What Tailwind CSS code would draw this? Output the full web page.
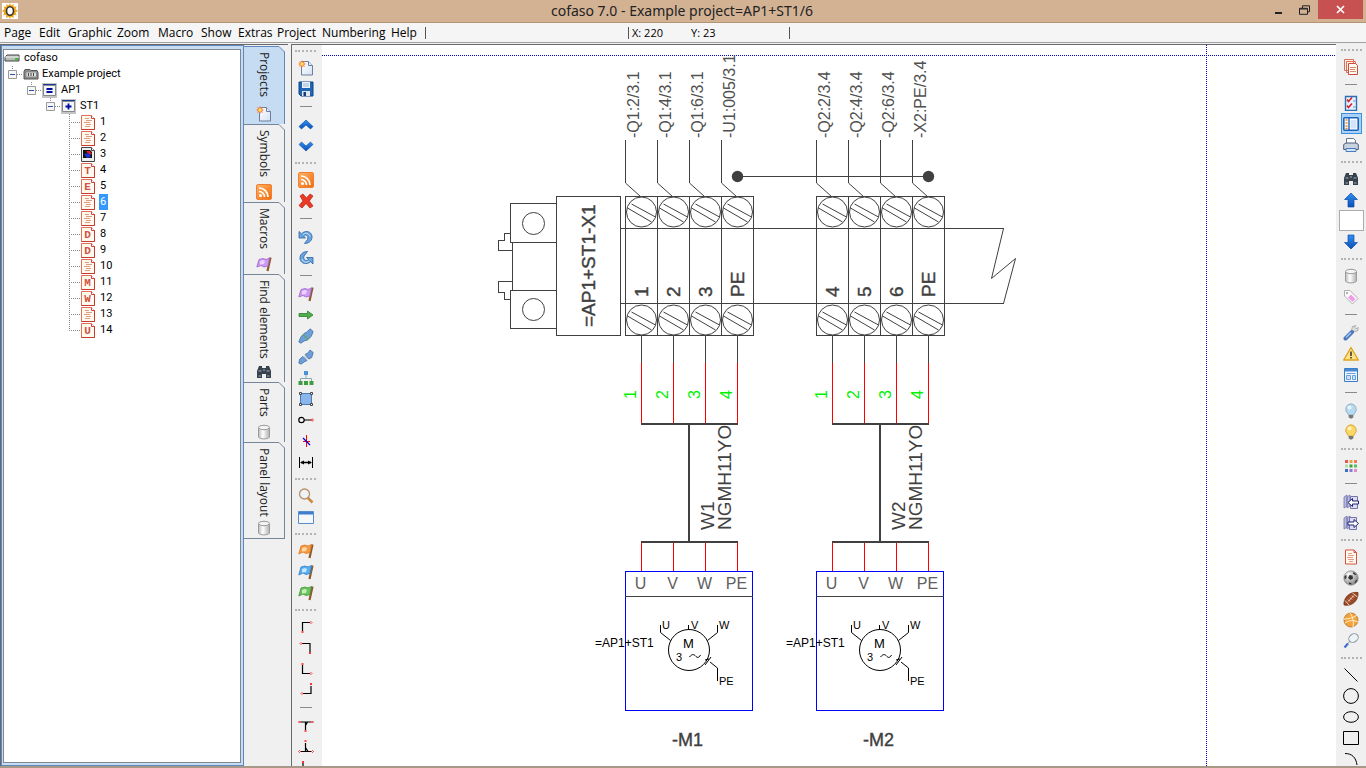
<!DOCTYPE html>
<html lang="en">
<head>
<meta charset="utf-8">
<title>cofaso 7.0 - Example project=AP1+ST1/6</title>
<script src="https://cdn.jsdelivr.net/npm/@tailwindcss/browser@4"></script>
</head>
<body class="flex h-screen flex-col overflow-hidden bg-[#f0f0f0] font-['Open_Sans','Liberation_Sans',sans-serif] text-xs text-black">

<svg width="0" height="0" class="absolute size-0" aria-hidden="true">
  <defs>
    <linearGradient id="gBlue" x1="0" y1="0" x2="0" y2="1"><stop offset="0" stop-color="#2f8ff0"/><stop offset="1" stop-color="#0b50b8"/></linearGradient>
    <linearGradient id="gPaper" x1="0" y1="0" x2="1" y2="1"><stop offset="0" stop-color="#fff"/><stop offset="1" stop-color="#d5e2f3"/></linearGradient>
    <linearGradient id="gOrange" x1="0" y1="0" x2="1" y2="1"><stop offset="0" stop-color="#ffb469"/><stop offset="1" stop-color="#f06a0a"/></linearGradient>
    <linearGradient id="gCyl" x1="0" y1="0" x2="1" y2="0"><stop offset="0" stop-color="#bdbdbd"/><stop offset=".4" stop-color="#fff"/><stop offset="1" stop-color="#b0b0b0"/></linearGradient>
    <radialGradient id="gBall" cx=".35" cy=".3" r=".8"><stop offset="0" stop-color="#fff"/><stop offset="1" stop-color="#777"/></radialGradient>
  </defs>
  <symbol id="i-new" viewBox="0 0 16 16"><path d="M3.500 1.500h7l4 4v9.500h-11z" fill="url(#gPaper)" stroke="#6b7f9c"/><path d="M10.500 1.500v4h4" fill="#e6eefa" stroke="#6b7f9c"/><path d="M4 0l1 2 2-1-1 2 2 1-2 1 1 2-2-1-1 2-1-2-2 1 1-2-2-1 2-1-1-2 2 1z" fill="#f47b4a"/><circle cx="4" cy="4" r="1.700" fill="#ffe65a"/></symbol>
  <symbol id="i-save" viewBox="0 0 16 16"><path d="M1 1h14v14H3l-2-2z" fill="#1f66b5" stroke="#0f4588"/><path d="M4 1h8v6H4z" fill="#eef4fb"/><path d="M5 3h6M5 5h6" stroke="#9ab7d8"/><path d="M4 10h8v5H4z" fill="#dfe6ee"/><path d="M5.500 11h2.500v4H5.500z" fill="#173c73"/></symbol>
  <symbol id="i-up" viewBox="0 0 16 16"><path d="M8 3l7 6.500-2.500 2.500L8 8l-4.500 4L1 9.500z" fill="url(#gBlue)" stroke="#0c4ba6" stroke-width=".6"/></symbol>
  <symbol id="i-down" viewBox="0 0 16 16"><path d="M8 13l7-6.500L12.500 4 8 8 3.500 4 1 6.500z" fill="url(#gBlue)" stroke="#0c4ba6" stroke-width=".6"/></symbol>
  <symbol id="i-rss" viewBox="0 0 16 16"><rect x=".5" y=".5" width="15" height="15" rx="1.500" fill="url(#gOrange)" stroke="#f08030"/><circle cx="4.500" cy="11.500" r="1.500" fill="#fff"/><path d="M3 7.500a5.500 5.500 0 0 1 5.500 5.500M3 4a9 9 0 0 1 9 9" fill="none" stroke="#fff" stroke-width="1.700"/></symbol>
  <symbol id="i-del" viewBox="0 0 16 16"><path d="M2 3l3-2 3.500 4L12 1l3 2-3.700 5L15 13l-3 2-4-4.500L4 15l-3-2.500L5 8z" fill="#ea3a24" stroke="#b81f12" stroke-width=".7"/></symbol>
  <symbol id="i-undo" viewBox="0 0 16 16"><path d="M1 2.500v6.500h6.500L5.500 7C8 5 11 6.500 9.500 10.500L6.500 14.500c5 0 8-3.500 7.500-7.500C13 2 7 1 3.500 4.800z" fill="#6aa5df" stroke="#2764a4" stroke-width=".8"/><path d="M5 5.500c3-2.500 6.500-1 7 2" fill="none" stroke="#cfe4f8"/></symbol>
  <symbol id="i-redo" viewBox="0 0 16 16"><path d="M15 14V7.500H8.500L10.500 9.500C8 11.500 5 10 6 6L9.500 1.500c-5 0-8 3.500-7.500 7.500C3 14 9 15 12.500 11.700z" fill="#6aa5df" stroke="#2764a4" stroke-width=".8"/><path d="M11 11c-3 2.500-6.500 1-7-2" fill="none" stroke="#cfe4f8"/></symbol>
  <symbol id="i-flagp" viewBox="0 0 16 16"><path d="M14.500 1.500l-3 13.500" stroke="#8d5a2a" stroke-width="2.200"/><path d="M3 3.500l4-1 3 1 3.500-1.500-1.500 8-4 1-3-1.500L.8 11z" fill="#c99af0" stroke="#a35fd0" stroke-width=".8"/><path d="M4 5l3-1 2 1-1 3-4 .5z" fill="#ead3ff"/></symbol>
  <symbol id="i-flago" viewBox="0 0 16 16"><path d="M14.500 1.500l-3 13.500" stroke="#8d5a2a" stroke-width="2.200"/><path d="M3 3l4-1 3 1 3.500-1.500-1.500 8-4 1-3-1.500L.8 11z" fill="#f79a45" stroke="#e0761d" stroke-width=".8"/><path d="M4 5l3-1 2 1-1 3-4 .5z" fill="#ffd7a8"/></symbol>
  <symbol id="i-flagb" viewBox="0 0 16 16"><path d="M14.500 1.500l-3 13.500" stroke="#8d5a2a" stroke-width="2.200"/><path d="M3 3l4-1 3 1 3.500-1.500-1.500 8-4 1-3-1.500L.8 11z" fill="#59adf2" stroke="#2a7fcc" stroke-width=".8"/><path d="M4 5l3-1 2 1-1 3-4 .5z" fill="#c4e6ff"/></symbol>
  <symbol id="i-flagg" viewBox="0 0 16 16"><path d="M14.500 1.500l-3 13.500" stroke="#8d5a2a" stroke-width="2.200"/><path d="M3 3l4-1 3 1 3.500-1.500-1.500 8-4 1-3-1.500L.8 11z" fill="#6cc35c" stroke="#3c9236" stroke-width=".8"/><path d="M4 5l3-1 2 1-1 3-4 .5z" fill="#c3eebb"/></symbol>
  <symbol id="i-right" viewBox="0 0 16 16"><path d="M1 6.500h8.500V4L15 8l-5.500 4V9.500H1z" fill="#4fae4c" stroke="#2b7d2c" stroke-width=".8"/></symbol>
  <symbol id="i-plug" viewBox="0 0 16 16"><path d="M.8 14l2-5L6 5.500l3-1.500L12 .8l3.200 2.700-2 5L9.500 12 6 13l-3 2.200z" fill="#6f9fd8" stroke="#3f6ea8" stroke-width=".8"/><path d="M5 6.500l5 5" stroke="#5fa85a" stroke-width="1.300"/></symbol>
  <symbol id="i-unplug" viewBox="0 0 16 16"><path d="M.8 14l1-4L5 7.500l4 4L6 13l-3 2.200zM7 5.500L10 4l2-3 3.200 2.500-1.500 5L11 10z" fill="#6f9fd8" stroke="#3f6ea8" stroke-width=".8"/><path d="M6.500 7l3.500 3.500" stroke="#bbb"/></symbol>
  <symbol id="i-org" viewBox="0 0 16 16"><path d="M8 5v4M2.500 11V8.500h11V11" fill="none" stroke="#8aa"/><path d="M6 1h4v4H6z" fill="#4a90dd"/><path d="M.5 11h4v4h-4zM6 11h4v4H6zM11.500 11h4v4h-4z" fill="#3f9c3f"/></symbol>
  <symbol id="i-sel" viewBox="0 0 16 16"><path d="M2.500 2.500h11v11h-11z" fill="#8ab6ec" stroke="#4b79b8"/><path d="M1.500 1.500h2v2h-2zM12.500 1.500h2v2h-2zM1.500 12.500h2v2h-2zM12.500 12.500h2v2h-2z" fill="#fff" stroke="#444"/></symbol>
  <symbol id="i-node" viewBox="0 0 16 16"><circle cx="3.500" cy="8" r="2.700" fill="none" stroke="#000" stroke-width="1.200"/><path d="M6 8h7" stroke="#000"/><circle cx="14.300" cy="8" r="1" fill="#fff" stroke="red" stroke-width=".8"/></symbol>
  <symbol id="i-cross" viewBox="0 0 16 16"><path d="M8.500 2v12M5 8.500h7" stroke="red"/><path d="M5 5l7 7" stroke="#0000e0" stroke-width="1.300"/></symbol>
  <symbol id="i-dim" viewBox="0 0 16 16"><path d="M1.500 3v11M14.500 3v11" stroke="#000"/><path d="M3 8.500h10" stroke="#000" stroke-width="1.500"/><path d="M2 8.500l4-2v4zM14 8.500l-4-2v4z"/></symbol>
  <symbol id="i-zoom" viewBox="0 0 16 16"><path d="M9.500 9.500l5 5" stroke="#c58a3f" stroke-width="2.500"/><circle cx="6.500" cy="6" r="5" fill="#eef3f8" stroke="#b89068" stroke-width="1.300"/></symbol>
  <symbol id="i-win" viewBox="0 0 16 16"><path d="M.5 2.500h15v12H.5z" fill="#f4f8fd" stroke="#5a8cc8"/><path d="M1 3h14v2.500H1z" fill="#3f7dd0"/></symbol>
  <symbol id="i-c1" viewBox="0 0 16 16"><path d="M4.500 12V3.500H12" fill="none" stroke="#000" stroke-width="1.200"/><path d="M4.500 12l1 1-1 1-1-1zM13 2.500l1 1-1 1-1-1z" fill="#fff" stroke="red" stroke-width=".8"/></symbol>
  <symbol id="i-c2" viewBox="0 0 16 16"><path d="M4 3.500h8V12" fill="none" stroke="#000" stroke-width="1.200"/><path d="M12 12l1 1-1 1-1-1zM3 2.500l1 1-1 1-1-1z" fill="#fff" stroke="red" stroke-width=".8"/></symbol>
  <symbol id="i-c3" viewBox="0 0 16 16"><path d="M4.500 4v8.500H12" fill="none" stroke="#000" stroke-width="1.200"/><path d="M4.500 2l1 1-1 1-1-1zM13 11.500l1 1-1 1-1-1z" fill="#fff" stroke="red" stroke-width=".8"/></symbol>
  <symbol id="i-c4" viewBox="0 0 16 16"><path d="M5 11.500h8V4" fill="none" stroke="#000" stroke-width="1.200"/><path d="M13 1l1 1-1 1-1-1zM4 10.500l1 1-1 1-1-1z" fill="#fff" stroke="red" stroke-width=".8"/></symbol>
  <symbol id="i-t1" viewBox="0 0 16 16"><path d="M2.500 4h11M7.500 4v8M9.500 4L7.500 7.500" fill="none" stroke="#000" stroke-width="1.200"/><path d="M7.500 12l1 1-1 1-1-1zM1.500 3l1 1-1 1-1-1zM14.500 3l1 1-1 1-1-1z" fill="#fff" stroke="red" stroke-width=".8"/></symbol>
  <symbol id="i-t2" viewBox="0 0 16 16"><path d="M2.500 12.500h11M7.500 4v8M7.500 8.500l2.500 4" fill="none" stroke="#000" stroke-width="1.200"/><path d="M7.500 1l1 1-1 1-1-1zM1.500 11.500l1 1-1 1-1-1zM14.500 11.500l1 1-1 1-1-1z" fill="#fff" stroke="red" stroke-width=".8"/></symbol>
  <symbol id="i-t3" viewBox="0 0 16 16"><path d="M5 3v12h4" fill="none" stroke="#000" stroke-width="1.200"/><path d="M5 1l1 1-1 1-1-1z" fill="#fff" stroke="red" stroke-width=".8"/></symbol>
  <symbol id="i-pages" viewBox="0 0 16 16"><path d="M1.500 .5h9v11h-9zM3.500 2.500h9v11h-9z" fill="#fff1e8" stroke="#d9705c"/><path d="M5.500 4.500h7l2 2v9h-9z" fill="#fffaf2" stroke="#cf4a38"/><path d="M7 8.500h6M7 10.500h5M7 12.500h6" stroke="#d88a70"/></symbol>
  <symbol id="i-check" viewBox="0 0 16 16"><path d="M2.500 1.500h11v14h-11z" fill="#e5f0fc" stroke="#2e6db5" stroke-width="1.400"/><path d="M4 4.500l1.500 2L9 2.500M4 10.500l1.500 2L9 8.500" fill="none" stroke="#d32020" stroke-width="1.500"/><path d="M10 6h2.500M10 12h2.500" stroke="#5b8fd0"/></symbol>
  <symbol id="i-layout" viewBox="0 0 16 16"><rect x=".8" y="1.800" width="14.400" height="12.400" rx="1" fill="#fff" stroke="#1b64c0" stroke-width="1.600"/><path d="M6 2v12" stroke="#1b64c0" stroke-width="1.400"/><path d="M2.500 4h2M2.500 7h2M2.500 10h2M2.500 12.500h2" stroke="#f28a1e" stroke-width="1.600"/><path d="M7.500 4h6v8.500h-6z" fill="#d4e5fa"/></symbol>
  <symbol id="i-print" viewBox="0 0 16 16"><path d="M3.500 7V1.500h7l2 2V7" fill="#fff" stroke="#5f7596"/><path d="M.7 7.500L3 6h10l2.300 1.500v5H.7z" fill="#c8d2e0" stroke="#4a5c78"/><path d="M3 11.500h10v3H3z" fill="#cfe4fa" stroke="#4a7cb8"/></symbol>
  <symbol id="i-bino" viewBox="0 0 16 16"><path d="M3 2h3v2h4V2h3l2 5v7h-5v-4H6v4H1V7z" fill="#36424d"/><path d="M2.500 7h3M10.500 7h3M2.500 12h2.500M11 12h2.500M7 6h2" stroke="#9fb0bd"/></symbol>
  <symbol id="i-aup" viewBox="0 0 16 16"><path d="M8 1l6.500 6.500H11V15H5V7.500H1.500z" fill="url(#gBlue)" stroke="#0e4ea5" stroke-width=".7"/></symbol>
  <symbol id="i-adn" viewBox="0 0 16 16"><path d="M8 15l6.500-6.500H11V1H5v7.500H1.500z" fill="url(#gBlue)" stroke="#0e4ea5" stroke-width=".7"/></symbol>
  <symbol id="i-cyl" viewBox="0 0 16 16"><path d="M2.500 3.500v9.500c1 2.500 10 2.500 11 0V3.500z" fill="url(#gCyl)" stroke="#9a9a9a"/><ellipse cx="8" cy="3.500" rx="5.500" ry="2.200" fill="#f4f4f4" stroke="#9a9a9a"/></symbol>
  <symbol id="i-tag" viewBox="0 0 16 16"><path d="M1.500 1.500H7L15 9.500 9.500 15 1.500 7z" fill="#fafafa" stroke="#b0b0b0"/><path d="M8 5.500l4.500 4.500-3 3L5 8.500z" fill="#f29bea"/><circle cx="4" cy="4" r="1" fill="#999"/></symbol>
  <symbol id="i-wrench" viewBox="0 0 16 16"><path d="M10 7l4.500-1 .8-3.500-2.300 1.200-1.500-1.500 1.300-1.700L9.500 1.500 8.500 5z" fill="#ddd" stroke="#999" stroke-width=".7"/><path d="M2.500 13.500L9 7" stroke="#4a78bf" stroke-width="4" stroke-linecap="round"/><path d="M3 12.500l5-5" stroke="#a6c6f0" stroke-width="1.400"/></symbol>
  <symbol id="i-warn" viewBox="0 0 16 16"><path d="M8 1.500L15.300 14H.7z" fill="#fbe388" stroke="#e0a21c" stroke-width="1.400" stroke-linejoin="round"/><path d="M8 5.500v4.500M8 11v1.500" stroke="#222" stroke-width="1.400"/></symbol>
  <symbol id="i-form" viewBox="0 0 16 16"><path d="M1.500 1.500h13v13h-13z" fill="#f0f6fd" stroke="#3b7dc8"/><path d="M2 2h12v2.500H2z" fill="#4a8ad4"/><path d="M3.500 6.500h9M3.500 8.500h4v4h-4zM9.500 8.500h3v4h-3z" fill="#cfe0f5" stroke="#6ca0dc"/></symbol>
  <symbol id="i-bulb" viewBox="0 0 16 16"><path d="M8 .8a5.500 5.500 0 0 1 3.500 9.500L10.500 12h-5l-1-1.700A5.500 5.500 0 0 1 8 .8z" fill="#b7daf0" stroke="#8fb2c8"/><circle cx="6.500" cy="4.500" r="2" fill="#eaf7ff"/><path d="M5.700 12h4.600v2.500L8 15.800l-2.300-1.300z" fill="#777"/></symbol>
  <symbol id="i-bulbon" viewBox="0 0 16 16"><path d="M8 .8a5.500 5.500 0 0 1 3.500 9.500L10.500 12h-5l-1-1.700A5.500 5.500 0 0 1 8 .8z" fill="#fbd768" stroke="#dda53a"/><circle cx="6.500" cy="4.500" r="2" fill="#fff4bd"/><path d="M5.700 12h4.600v2.500L8 15.800l-2.300-1.300z" fill="#777"/></symbol>
  <symbol id="i-grid" viewBox="0 0 16 16"><path d="M2 2h3v3H2z" fill="#e05a5a"/><path d="M6.500 2h3v3h-3z" fill="#f0a040"/><path d="M11 2h3v3h-3z" fill="#f07a60"/><path d="M2 6.500h3v3H2z" fill="#b8d8b0"/><path d="M6.500 6.500h3v3h-3z" fill="#38a838"/><path d="M11 6.500h3v3h-3z" fill="#58c060"/><path d="M2 11h3v3H2z" fill="#3f6fc0"/><path d="M6.500 11h3v3h-3z" fill="#8a78d8"/><path d="M11 11h3v3h-3z" fill="#e090c8"/></symbol>
  <symbol id="i-prev" viewBox="0 0 16 16"><path d="M1 3l3-2v11l-3 2zM4 3l3-2v11l-3 2z" fill="#b9b9e2" stroke="#7474a8" stroke-width=".8"/><path d="M7.500 2.500h7v12h-7z" fill="#dcdcf2" stroke="#7474a8"/><path d="M5 8.500L9.500 4.500v2.500h6v3h-6v2.500z" fill="#fff" stroke="#20207a"/></symbol>
  <symbol id="i-next" viewBox="0 0 16 16"><path d="M1 3l3-2v11l-3 2zM4 3l3-2v11l-3 2z" fill="#b9b9e2" stroke="#7474a8" stroke-width=".8"/><path d="M6.500 2.500h7v12h-7z" fill="#dcdcf2" stroke="#7474a8"/><path d="M15.500 8.500L11 4.500v2.500H5v3h6v2.500z" fill="#fff" stroke="#20207a"/></symbol>
  <symbol id="i-doc" viewBox="0 0 16 16"><path d="M2.500 1h8.500l2.500 2.500V15h-11z" fill="#fffaf0" stroke="#d6503e"/><path d="M11 1v2.500h2.500" fill="none" stroke="#d6503e"/><path d="M5 4.500h4M5 6.500h6M4 8.500h6M5 10.500h6M6 12.500h4" stroke="#e39a84"/></symbol>
  <symbol id="i-soccer" viewBox="0 0 16 16"><circle cx="8" cy="8" r="7.200" fill="url(#gBall)" stroke="#777" stroke-width=".6"/><path d="M6.500 5l3 .5 .5 3-2.500 1.500L5 8zM1.500 6l2-1L3.500 8 1.500 9.500zM10.500 2l3 2.500-1.500 .5-2-1.500zM12.500 10.500l2-1-1.500 3-1.500 .5zM6 12.500l2.500 .5-.5 1.500-2-.5z" fill="#333"/></symbol>
  <symbol id="i-rugby" viewBox="0 0 16 16"><path d="M1 14C0 8 6 0 15 1.500 16 9 9 16 1 14z" fill="#9a4a25" stroke="#6d2c12" stroke-width=".7"/><path d="M5 10.500l6-6M5 8.500l2 2M7 6.500l2 2M9 4.500l2 2M2 9.500l4 4.500M9.500 2l5 4" stroke="#f4ddcf" stroke-width=".9" fill="none"/></symbol>
  <symbol id="i-basket" viewBox="0 0 16 16"><circle cx="8" cy="8" r="7" fill="#f2a33f" stroke="#b8701d" stroke-width=".8"/><path d="M1 7c5 0 9-1 13-4M7 1c3 4 4 9 3 14M2 11c4-3 9-3 13-1" fill="none" stroke="#fff1c8"/></symbol>
  <symbol id="i-racket" viewBox="0 0 16 16"><ellipse cx="10.500" cy="5" rx="5" ry="4" transform="rotate(-35 10.500 5)" fill="#eef3f6" stroke="#8d9aa3"/><path d="M7 8l-2.500 3" stroke="#8d9aa3"/><path d="M5 10.500L1.500 14.500" stroke="#3f6fd0" stroke-width="2.200"/></symbol>
  <symbol id="i-line" viewBox="0 0 16 16"><path d="M1.500 1.500l13 13" stroke="#000"/></symbol>
  <symbol id="i-circle" viewBox="0 0 16 16"><circle cx="8" cy="8" r="7.400" fill="none" stroke="#000"/></symbol>
  <symbol id="i-ell" viewBox="0 0 16 16"><ellipse cx="8" cy="8" rx="7.400" ry="5.300" fill="none" stroke="#000"/></symbol>
  <symbol id="i-rect" viewBox="0 0 16 16"><path d="M.5 1.500h15v13H.5z" fill="none" stroke="#000"/></symbol>
  <symbol id="i-arc" viewBox="0 0 16 16"><path d="M2 2.500c7 0 11 4 12 11.500" fill="none" stroke="#000"/></symbol>
  <symbol id="i-pg" viewBox="0 0 14 15"><path d="M.5 .5h10l3 3v11H.500z" fill="#fffaf0" stroke="#e0705c"/><path d="M13.500 3v11.500H.5" fill="none" stroke="#c83a2a"/><path d="M10.500 .5v3h3" fill="#fff" stroke="#c84a3a"/></symbol>
  <symbol id="i-minus" viewBox="0 0 9 9"><path d="M.5 .5h8v8h-8z" fill="#f6f6f6" stroke="#9a9a9a"/><path d="M2 4.500h5" stroke="#3050a8"/></symbol>
</svg>

<header class="flex h-[23px] shrink-0 items-center border-b border-[#b39475] bg-[#d3b294] pl-0.5">
  <svg class="size-4 shrink-0 bg-white" viewBox="0 0 16 16"><path d="M8 0l1.200 2.500L11.500 1l.3 2.800 2.800-.3L13.500 6l2.500 2-2.500 1.500 1 2.800-2.800-.2-.2 2.800-2.500-1.200L8 16l-1.200-2.300-2.500 1.200-.2-2.800-2.800.2 1-2.800L0 8l2.500-2L1.400 3.500l2.800.3L4.500 1l2.300 1.500z" fill="#f0a81e"/><ellipse cx="8" cy="8" rx="3.500" ry="4.200" fill="#fff" stroke="#3a3530" stroke-width="1.600"/></svg>
  <h1 class="flex-1 pl-20 text-center font-['Noto_Sans','Open_Sans',sans-serif] text-sm leading-5 text-[#222]">cofaso 7.0 - Example project=AP1+ST1/6</h1>
  <div class="flex h-full w-[100px] shrink-0 items-start">
    <button aria-label="Minimize" class="flex h-5 w-6 items-center justify-center"><svg width="9" height="9" viewBox="0 0 9 9"><path d="M1 7h7" stroke="#222" stroke-width="2"/></svg></button>
    <button aria-label="Restore" class="flex h-[19px] w-7 items-center justify-center"><svg width="11" height="10" viewBox="0 0 11 10"><path d="M3.500 3V.8h7v6H8.500M.5 3.300h8v6h-8zM.5 4h8" fill="none" stroke="#222"/></svg></button>
    <button aria-label="Close" class="flex h-[19px] w-[45px] items-center justify-center bg-[#c75050]"><svg width="9" height="9" viewBox="0 0 9 9"><path d="M1 1l7 7M8 1L1 8" stroke="#fff" stroke-width="1.700"/></svg></button>
  </div>
</header>

<nav class="flex h-5 shrink-0 items-center border-b border-[#a0a0a0] bg-[#f5f5f5] pl-1 leading-4">
  <div class="grid w-[421px] shrink-0 grid-cols-[35px_29px_49px_41px_43px_37px_39px_45px_69px_30px] justify-items-start whitespace-nowrap">
    <button>Page</button><button>Edit</button><button>Graphic</button><button>Zoom</button><button>Macro</button><button>Show</button><button>Extras</button><button>Project</button><button>Numbering</button><button>Help</button>
  </div>
  <div class="h-3 w-[203px] shrink-0 border-l border-[#555]"></div>
  <div class="flex h-3 w-[161px] shrink-0 items-center gap-7 border-l border-[#555] pl-[3px] text-[11px]"><span>X: 220</span><span>Y: 23</span></div>
  <div class="h-3 border-l border-[#555]"></div>
</nav>

<main class="flex min-h-0 flex-1">
  <aside class="mt-px flex w-[288px] shrink-0 border-l border-t border-[#696969]">
    <div class="flex w-[243px] shrink-0 border border-[#5f86bf] bg-[#c6dcf2] p-px pb-0.5 pt-[3px] pr-0.5">
      <ul id="tree" class="flex-1 border border-[#7f8790] bg-white font-['Roboto','Open_Sans',sans-serif] text-[11px] leading-4" role="tree">
        <li class="flex h-4 items-center gap-1"><svg width="16" height="9" viewBox="0 0 16 9"><path d="M1 3l2-2h12v6H1z" fill="#b8bcb8" stroke="#444"/><path d="M1 3h14" stroke="#eee"/><path d="M11 4h3v2h-3z" fill="#3ac03a"/></svg><span>cofaso</span></li>
        <li class="flex h-4 items-center">
          <svg width="15" height="16" class="ml-1" viewBox="0 0 15 16"><path d="M4.500 0v3M9 8.500h6" stroke="#888" stroke-dasharray="1 1" fill="none"/><use href="#i-minus" x="0" y="4" width="9" height="9"/></svg>
          <svg width="16" height="12" viewBox="0 0 16 12"><path d="M1 3.500l1-2h5l1 1h6l1 2v6.500H1z" fill="#8c8c8c" stroke="#555"/><path d="M3.500 4.500h9.500v4H3.500z" fill="#ddd"/><path d="M5.500 5v3M8 5v3M10.500 5v3" stroke="#444"/></svg><span class="pl-[3px]">Example project</span></li>
        <li class="flex h-4 items-center">
          <svg width="15" height="16" class="ml-[23px]" viewBox="0 0 15 16"><path d="M4.500 0v3M9 8.500h6" stroke="#888" stroke-dasharray="1 1" fill="none"/><use href="#i-minus" x="0" y="4" width="9" height="9"/></svg>
          <svg width="15" height="15" viewBox="0 0 15 15"><path d="M0 0h15v15H0z" fill="#c4c4c4"/><path d="M1.500 2.500h12v10h-12z" fill="#f4f6fb" stroke="#888"/><path d="M1 1.500h13" stroke="#1a3c9c"/><path d="M4.500 6h6M4.500 9h6" stroke="#000f9c" stroke-width="1.800"/></svg><span class="pl-1">AP1</span></li>
        <li class="flex h-4 items-center">
          <svg width="15" height="16" class="ml-[42px]" viewBox="0 0 15 16"><path d="M4.500 0v3M9 8.500h6" stroke="#888" stroke-dasharray="1 1" fill="none"/><use href="#i-minus" x="0" y="4" width="9" height="9"/></svg>
          <svg width="15" height="15" viewBox="0 0 15 15"><path d="M0 0h15v15H0z" fill="#c4c4c4"/><path d="M1.500 2.500h12v10h-12z" fill="#f4f6fb" stroke="#888"/><path d="M1 1.500h13" stroke="#1a3c9c"/><path d="M4.500 7.500h6M7.500 4.500v6" stroke="#000f9c" stroke-width="1.800"/></svg><span class="pl-1">ST1</span></li>
      </ul>
    </div>
    <div id="tabs" class="flex w-[41px] shrink-0 flex-col pt-px" role="tablist"></div>
  </aside>

  <section class="ml-[3px] mt-px flex min-w-0 flex-1 border-l border-t border-[#696969]">
    <div id="leftbar" class="flex w-[30px] shrink-0 flex-col items-center overflow-hidden bg-[#f0f0f0] pr-[3px]" role="toolbar" aria-label="Drawing tools"></div>
    <div class="min-w-0 flex-1 overflow-hidden bg-white">
      <svg id="sheet" width="1014" height="722" viewBox="322 45 1014 722" class="block font-['Liberation_Sans',Arial,sans-serif]" role="img" aria-label="Terminal diagram"></svg>
    </div>
  </section>
  <div id="rightbar" class="flex w-[30px] shrink-0 flex-col items-center overflow-hidden bg-[#f0f0f0]" role="toolbar" aria-label="View tools"></div>
</main>
<footer class="h-0.5 shrink-0 bg-[#a89888]"></footer>

<script>
const pages = [['1',''],['2',''],['3','img'],['4','T'],['5','E'],['6',''],['7',''],['8','D'],['9','D'],['10',''],['11','M'],['12','W'],['13',''],['14','U']];
document.getElementById('tree').insertAdjacentHTML('beforeend', pages.map(([n, k], i) => {
  const body = k === 'img'
    ? '<path d="M.5 .5h10l3 3v11H.5z" fill="#eee" stroke="#444"/><path d="M10.500 .5v3h3" fill="#fff" stroke="#444"/><path d="M2 3h7l2 2v6H2z" fill="#111"/><path d="M5 4h4l2 3-3 1z" fill="#e02020"/><path d="M3 7l5-1 2 4-4 1z" fill="#2030d0"/>'
    : '<use href="#i-pg" width="14" height="15"/>' + (k
      ? `<text x="6.500" y="11" text-anchor="middle" font-family="Liberation Mono, monospace" font-size="11" font-weight="bold" fill="#cf5442">${k}</text>`
      : '<path d="M4 3.500h4M5 5.500h6M3 7.500h6M5 9.500h5M4 11.500h5" stroke="#e09a84"/>');
  const last = i === pages.length - 1;
  return `<li class="flex h-4 items-center"><svg width="11" height="16" class="ml-[65px]" viewBox="0 0 11 16"><path d="M.5 0v${last ? 9 : 16}M2 8.500h9" stroke="#888" stroke-dasharray="1 1"/></svg><svg width="14" height="15" class="ml-px" viewBox="0 0 14 15">${body}</svg><span class="${n === '6' ? 'ml-1 bg-[#3399ff] pl-px pr-0.5 text-white' : 'ml-1 pl-px'}">${n}</span></li>`;
}).join(''));

const tabs = [['Projects','new','h-[78px]'],['Symbols','rss','h-[78px]'],['Macros','flagp','h-[72px]'],['Find elements','bino','h-[108px]'],['Parts','cyl','h-[60px]'],['Panel layout','cyl','h-[97px]']];
document.getElementById('tabs').innerHTML = tabs.map(([t, ic, h], i) => {
  const on = i === 0, line = on ? '#5f86bf' : '#75869b', fill = on ? '#c6dcf2' : '#f0f0f0';
  return `<button role="tab" aria-selected="${on}" class="relative flex ${h} shrink-0 flex-col items-center justify-between border-r pb-0.5 pt-1.5 pr-px ${on ? 'border-[#5f86bf] bg-[#c6dcf2]' : 'border-[#75869b]'} ${i === 5 ? 'border-b' : ''}"><svg width="41" height="7" viewBox="0 0 41 7" class="absolute left-0 top-0"><path d="M34 0h7v6z" fill="#f0f0f0"/><path d="M0 .5h35L40.500 6v1" fill="${fill}" stroke="${line}"/></svg><span class="relative leading-4 text-[#222] [writing-mode:vertical-rl]">${t}</span><svg class="size-4"><use href="#i-${ic}"/></svg></button>`;
}).join('');

const bar = (id, items) => document.getElementById(id).innerHTML = items.map(n =>
  n === '|' ? '<div class="flex h-[15px] w-3 shrink-0 items-center"><div class="h-px w-full bg-[#8a8a8a]"></div></div>'
  : n === '.' ? '<div class="flex h-3 w-full shrink-0 items-center justify-center"><div class="w-[21px] border-t-2 border-dotted border-[#b4b4b4]"></div></div>'
  : n === ':' ? '<div class="flex h-[13px] w-full shrink-0 items-center justify-center"><div class="w-[21px] border-t-2 border-dotted border-[#b4b4b4]"></div></div>'
  : n === 'input' ? '<input aria-label="Page number" class="h-[21px] w-[25px] shrink-0 border border-[#a9acb0] bg-white">'
  : `<button aria-label="${n}" class="flex h-[21px] w-[21px] shrink-0 items-center justify-center ${n === 'layout' ? 'border border-[#3c8fe0] bg-[#a9d0f5]' : ''}"><svg class="size-4 shrink-0"><use href="#i-${n}"/></svg></button>`).join('');
bar('leftbar', '. new save | up down : rss del | undo redo | flagp right plug unplug org sel node cross dim : zoom win : flago flagb flagg : c1 c2 c3 c4 | t1 t2 t3'.split(' '));
bar('rightbar', ': pages | check layout print : bino aup input adn : cyl tag | wrench warn form | bulb bulbon : grid | prev next : doc soccer rugby basket racket : line circle ell rect arc'.split(' '));

const D = '#404040';
const P = (d, c = D, w = 1) => `<path d="${d}" fill="none" stroke="${c}" stroke-width="${w}" shape-rendering="crispEdges"/>`;
const L = (d, c = D) => `<path d="${d}" fill="none" stroke="${c}"/>`;
const C = (x, y, r, c = D) => `<circle cx="${x}" cy="${y}" r="${r}" fill="none" stroke="${c}"/>`;
const T = (x, y, s, t, c = D, a = 'start') => `<text x="${x}" y="${y}" font-size="${s}" fill="${c}" text-anchor="${a}">${t}</text>`;
const V = (x, y, s, t, c = D, b = 0) => `<text transform="translate(${x} ${y}) rotate(-90)" font-size="${s}" fill="${c}"${b ? ` stroke="${c}" stroke-width=".4"` : ''}>${t}</text>`;

let s = P('M322 55.500H1336M1206.500 45V767', '#0000b0').replaceAll('stroke-width="1"', 'stroke-width="1" stroke-dasharray="1 1"');
s += P('M556.500 196.500h64v139h-64zM510.500 203.500h46v39h-46zM510.500 290.500h46v38h-46zM512.500 242v48M510.500 233.500h-6v7h-6v10h14M512.500 281.500h-14v11h6v7h6');
s += C(533.5, 223.5, 11) + C(533.5, 309.5, 11) + V(595, 327, 19, '=AP1+ST1-X1', D, 1);
s += P('M620 228.500H1003.500M620 303.500H1003.500M737 176.500H928') + L('M1003.500 228.500L991.500 278.500L1015.500 258.500L1003.500 303.500');
s += `<circle cx="737.500" cy="176.500" r="5.700" fill="${D}"/><circle cx="928.500" cy="176.500" r="5.700" fill="${D}"/>`;

const groups = [
  {dx: 0, top: ['-Q1:2/3.1','-Q1:4/3.1','-Q1:6/3.1','-U1:005/3.1'], num: ['1','2','3','PE'], w: 'W1', m: '-M1'},
  {dx: 191, top: ['-Q2:2/3.4','-Q2:4/3.4','-Q2:6/3.4','-X2:PE/3.4'], num: ['4','5','6','PE'], w: 'W2', m: '-M2'}
];
for (const g of groups) {
  s += `<g transform="translate(${g.dx} 0)">` + P('M625.500 196.500h128v139h-128zM657.500 196v139M689.500 196v139M721.500 196v139');
  for (let i = 0; i < 4; i++) {
    const x = 625.5 + 32 * i, c = x + 16;
    s += P(`M${x} 140V183`) + L(`M${x} 183L${c - 1} 196.500`);
    for (const cy of [212, 320]) s += C(c, cy, 15) + L(`M${c - 10} ${cy - 8}L${c + 14} ${cy + 5}M${c - 14} ${cy - 4}L${c + 10} ${cy + 10}`);
    s += V(x + 13, 138, 16, g.top[i], '#505050') + V(x + 22, 297, 19, g.num[i], D, 1);
    s += P(`M${c} 335V363`) + P(`M${c} 363V424M${c} 542V571`, '#f00') + V(x + 10, 399, 16, i + 1, '#00f000');
    s += T(c - 1, 589, 16, ['U','V','W','PE'][i], '#606060', 'middle');
  }
  s += P('M641 424H738M689 424V542M641 542H738', D, 2) + V(714, 530, 19, g.w) + V(731, 530, 19, 'NGMH11YO');
  s += P('M625.500 571.500h127v139h-127z', '#0000ff') + P('M625 596.500H753');
  s += C(689, 650, 20.5, '#000') + L('M660.500 625v7.500l10 8M688.500 625v5M717.500 625v7.500l-10 8M705 665l6-8M705 660l4-1M710 662l7.500 6v13M689.500 657c3-4 5-2 6-1s3 3 5-1', '#000');
  s += T(595, 647, 12, '=AP1+ST1', '#000') + T(662, 629, 11, 'U', '#000') + T(691, 629, 11, 'V', '#000') + T(719, 629, 11, 'W', '#000') + T(719, 685, 11, 'PE', '#000') + T(683, 648, 13, 'M', '#000') + T(676, 661, 11, '3', '#000');
  s += `<text x="672" y="746" font-size="18" fill="${D}" stroke="${D}" stroke-width=".4">${g.m}</text></g>`;
}
document.getElementById('sheet').innerHTML = s;
</script>
</body>
</html>
